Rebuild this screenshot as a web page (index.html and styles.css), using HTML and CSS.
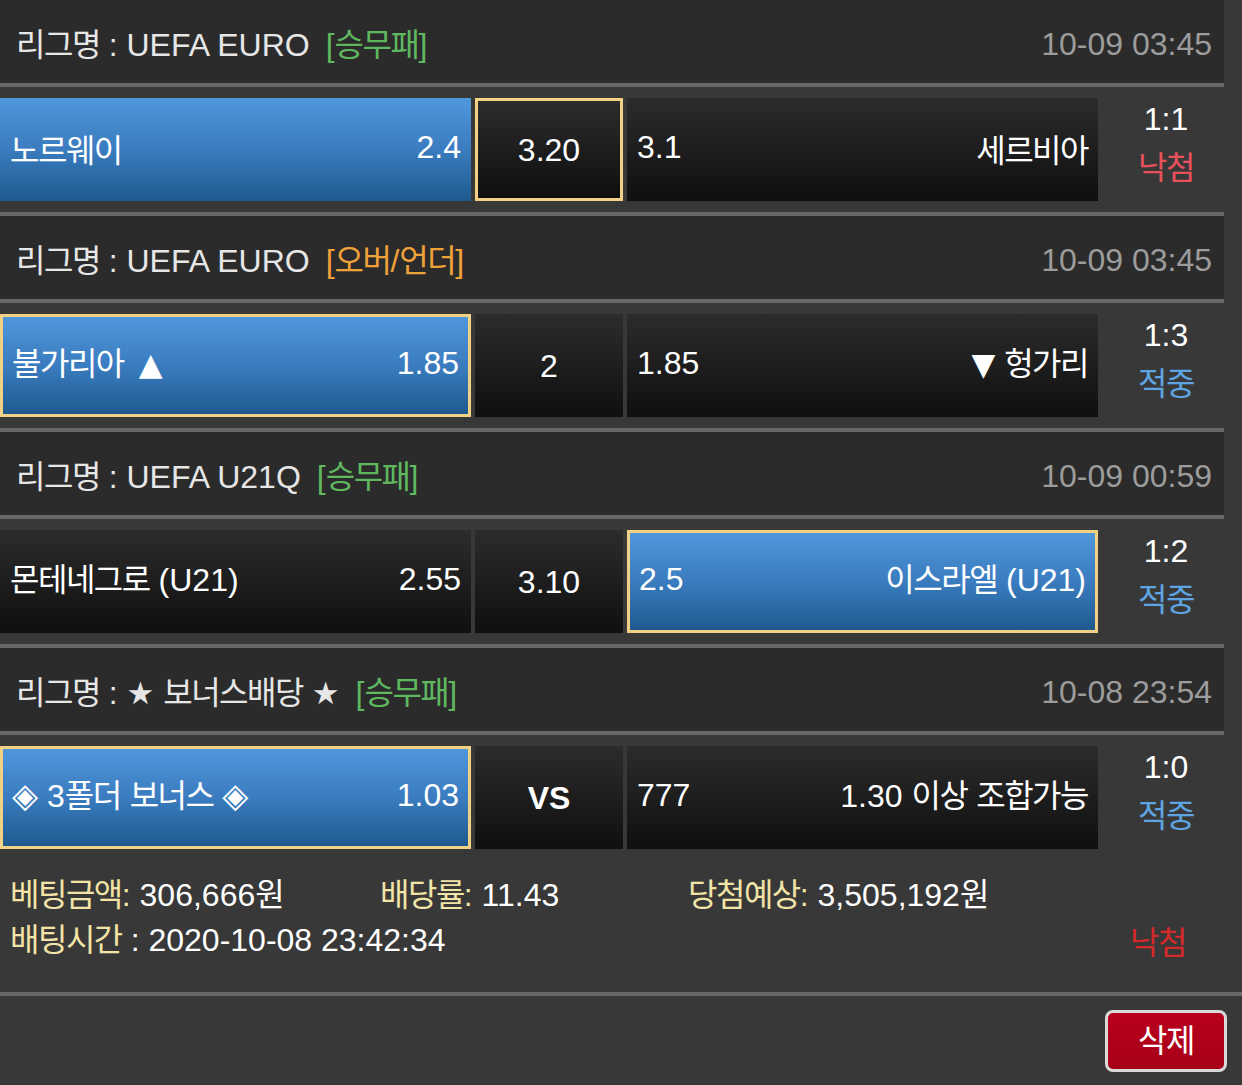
FILE: index.html
```html
<!DOCTYPE html>
<html lang="ko">
<head>
<meta charset="utf-8">
<title>베팅내역</title>
<link rel="stylesheet" href="styles.css">
</head>
<body>
<div class="list">
  <section class="game">
    <div class="ghead">
      <div class="league"><span class="k">리그명</span> : UEFA EURO<span class="tag green">[<span class="k">승무패</span>]</span></div>
      <div class="time">10-09 03:45</div>
    </div>
    <div class="grow">
      <div class="cell side blue"><span class="k">노르웨이</span><span>2.4</span></div>
      <div class="cell draw pick"><span class="dv">3.20</span></div>
      <div class="cell side"><span>3.1</span><span class="k">세르비아</span></div>
      <div class="score"><span>1:1</span><span class="k lose">낙첨</span></div>
    </div>
  </section>
  <section class="game">
    <div class="ghead">
      <div class="league"><span class="k">리그명</span> : UEFA EURO<span class="tag orange">[<span class="k">오버</span>/<span class="k">언더</span>]</span></div>
      <div class="time">10-09 03:45</div>
    </div>
    <div class="grow">
      <div class="cell side blue pick"><span><span class="k">불가리아</span> <span class="sym tri">▲</span></span><span>1.85</span></div>
      <div class="cell draw"><span class="dv">2</span></div>
      <div class="cell side"><span>1.85</span><span><span class="sym">▼</span> <span class="k">헝가리</span></span></div>
      <div class="score"><span>1:3</span><span class="k win">적중</span></div>
    </div>
  </section>
  <section class="game">
    <div class="ghead">
      <div class="league"><span class="k">리그명</span> : UEFA U21Q<span class="tag green">[<span class="k">승무패</span>]</span></div>
      <div class="time">10-09 00:59</div>
    </div>
    <div class="grow">
      <div class="cell side"><span><span class="k">몬테네그로</span> (U21)</span><span>2.55</span></div>
      <div class="cell draw"><span class="dv">3.10</span></div>
      <div class="cell side blue pick"><span>2.5</span><span><span class="k">이스라엘</span> (U21)</span></div>
      <div class="score"><span>1:2</span><span class="k win">적중</span></div>
    </div>
  </section>
  <section class="game">
    <div class="ghead">
      <div class="league"><span class="k">리그명</span> : <span class="sym">★</span> <span class="k">보너스배당</span> <span class="sym">★</span><span class="tag green">[<span class="k">승무패</span>]</span></div>
      <div class="time">10-08 23:54</div>
    </div>
    <div class="grow">
      <div class="cell side blue pick"><span><span class="sym dia">◈</span> 3<span class="k">폴더</span> <span class="k">보너스</span> <span class="sym dia">◈</span></span><span>1.03</span></div>
      <div class="cell draw"><span class="dv vs">VS</span></div>
      <div class="cell side"><span>777</span><span>1.30 <span class="k">이상</span> <span class="k">조합가능</span></span></div>
      <div class="score"><span>1:0</span><span class="k win">적중</span></div>
    </div>
  </section>
</div>
<div class="summary">
  <div class="sline">
    <div class="item"><span class="lbl"><span class="k">베팅금액</span>:</span> 306,666<span class="k">원</span></div>
    <div class="item"><span class="lbl"><span class="k">배당률</span>:</span> 11.43</div>
    <div class="item"><span class="lbl"><span class="k">당첨예상</span>:</span> 3,505,192<span class="k">원</span></div>
  </div>
  <div class="sline2">
    <div class="item"><span class="lbl"><span class="k">배팅시간</span></span> : 2020-10-08 23:42:34</div>
    <div class="result k">낙첨</div>
  </div>
</div>
<div class="actions">
  <button class="del"><span class="k">삭제</span></button>
</div>
</body>
</html>
```
FILE: styles.css
```css
* { box-sizing: border-box; }
body {
  margin: 0;
  background: #383838;
  color: #ffffff;
  font-family: "Liberation Sans", Arial, "Noto Sans CJK KR", sans-serif;
  font-size: 32px;
}
.k {
  font-family: "Noto Sans CJK KR", sans-serif;
  font-size: 32px;
  letter-spacing: -1.5px;
  line-height: 1;
}
.sym {
  font-family: "DejaVu Sans", "Noto Sans CJK KR", sans-serif;
  font-size: 31px;
  line-height: 1;
}
.tri { margin-left: 6px; }
.dia { font-size: 34px; }
.list { width: 1224px; }
.ghead {
  height: 87px;
  background: #2b2b2b;
  border-bottom: 4px solid #686868;
  display: flex;
  align-items: center;
  justify-content: space-between;
  padding: 6px 12px 0 16px;
}
.league { color: #e6e6e6; white-space: nowrap; }
.tag { margin-left: 16px; }
.green { color: #5fb85f; }
.orange { color: #f0a23a; }
.time { color: #9c9c9c; }
.grow {
  display: flex;
  align-items: flex-start;
  gap: 4px;
  padding: 11px 0;
  border-bottom: 4px solid #686868;
}
.game:last-child .grow { border-bottom: none; }
.cell {
  height: 103px;
  display: flex;
  align-items: center;
  justify-content: space-between;
  padding: 0 10px 4px;
  background: linear-gradient(#2c2c2c, #0f0f0f);
  white-space: nowrap;
}
.side { width: 471px; }
.draw { width: 148px; justify-content: center; }
.dv { padding-top: 6px; }
.vs { font-weight: bold; }
.blue { background: linear-gradient(#4f97db, #3a7cbf 50%, #1e5a8f); }
.pick { border: 3px solid #f3d184; padding: 0 9px 4px; }
.score {
  flex: 1;
  height: 100px;
  margin-top: -2px;
  display: flex;
  flex-direction: column;
  align-items: center;
  padding-left: 6px;
  line-height: 46px;
}
.score .k { line-height: 46px; }
.lose { color: #e8505c; }
.win { color: #5ea4e0; }
.summary {
  padding: 13px 0 29px 10px;
  border-bottom: 4px solid #686868;
  line-height: 45px;
}
.sline {
  display: grid;
  grid-template-columns: 370px 308px 1fr;
}
.sline2 {
  display: flex;
  justify-content: space-between;
  padding-right: 56px;
}
.lbl { color: #f2e3a6; }
.result { color: #d42a2a; line-height: 45px; }
.actions {
  display: flex;
  justify-content: flex-end;
  padding: 14px 15px 0 0;
}
.del {
  width: 122px;
  height: 62px;
  border: 3px solid #d9d9d9;
  border-radius: 8px;
  background: linear-gradient(#b8001d, #a80018);
  color: #ffffff;
  font-family: inherit;
  font-size: 32px;
  padding: 0;
}
```
